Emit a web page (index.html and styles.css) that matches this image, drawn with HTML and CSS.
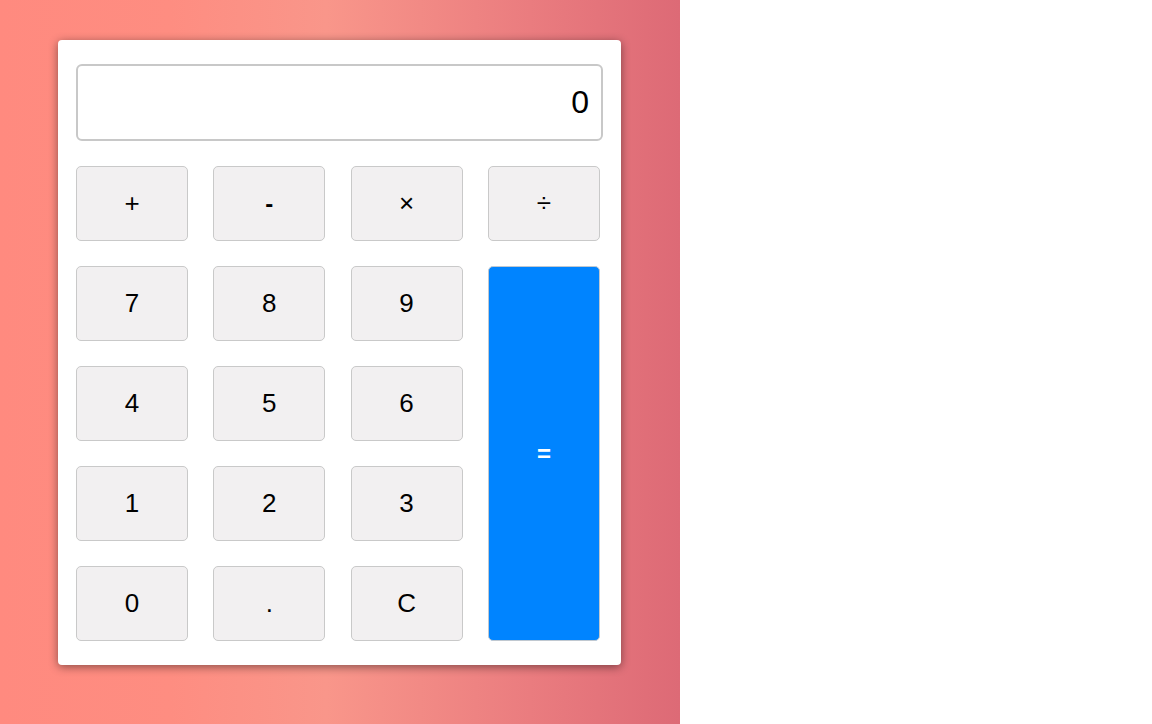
FILE: index.html
```html
<!DOCTYPE html>
<html>
<head>
<meta charset="utf-8">
<link rel="stylesheet" href="styles.css">
</head>
<body>
<div class="app">
  <div class="calc">
    <div class="display">0</div>
    <div class="keys">
      <button class="key">+</button>
      <button class="key op">-</button>
      <button class="key">×</button>
      <button class="key">÷</button>
      <button class="key">7</button>
      <button class="key">8</button>
      <button class="key">9</button>
      <button class="key op equals">=</button>
      <button class="key">4</button>
      <button class="key">5</button>
      <button class="key">6</button>
      <button class="key">1</button>
      <button class="key">2</button>
      <button class="key">3</button>
      <button class="key">0</button>
      <button class="key">.</button>
      <button class="key">C</button>
    </div>
  </div>
</div>
</body>
</html>
```
FILE: styles.css
```css
html, body {
  margin: 0;
  padding: 0;
  background: #fff;
  font-family: "Liberation Sans", Arial, sans-serif;
}
.app {
  width: 680px;
  height: 724px;
  box-sizing: border-box;
  padding-top: 40px;
  padding-left: 58px;
  background: linear-gradient(to right, #ff8a7f 0%, #fe8d81 25%, #f9968a 48%, #ea7c7f 78%, #dd6a76 100%);
}
.calc {
  width: 563px;
  height: 625px;
  box-sizing: border-box;
  background: #fff;
  border-radius: 4px;
  box-shadow: 0 2px 10px rgba(0, 0, 0, 0.45);
  padding: 24px 18px;
  display: flex;
  flex-direction: column;
  gap: 25px;
}
.display {
  height: 77px;
  box-sizing: border-box;
  border: 2px solid #c8c8c8;
  border-radius: 6px;
  font-size: 32px;
  line-height: 73px;
  text-align: right;
  padding-right: 12px;
  color: #000;
}
.keys {
  width: 525px;
  display: grid;
  grid-template-columns: repeat(4, 112px);
  grid-template-rows: repeat(5, 75px);
  column-gap: 25.3px;
  row-gap: 25px;
}
.key {
  margin: 0;
  padding: 0;
  border: 1px solid #c9c9c9;
  border-radius: 5px;
  background: #f2f0f1;
  font-family: "Liberation Sans", Arial, sans-serif;
  font-size: 26px;
  color: #000;
}
.op {
  font-weight: bold;
  font-size: 24px;
}
.equals {
  grid-column: 4;
  grid-row: 2 / span 4;
  background: #0084ff;
  border-color: #c0c8d0;
  color: #fff;
}
```
